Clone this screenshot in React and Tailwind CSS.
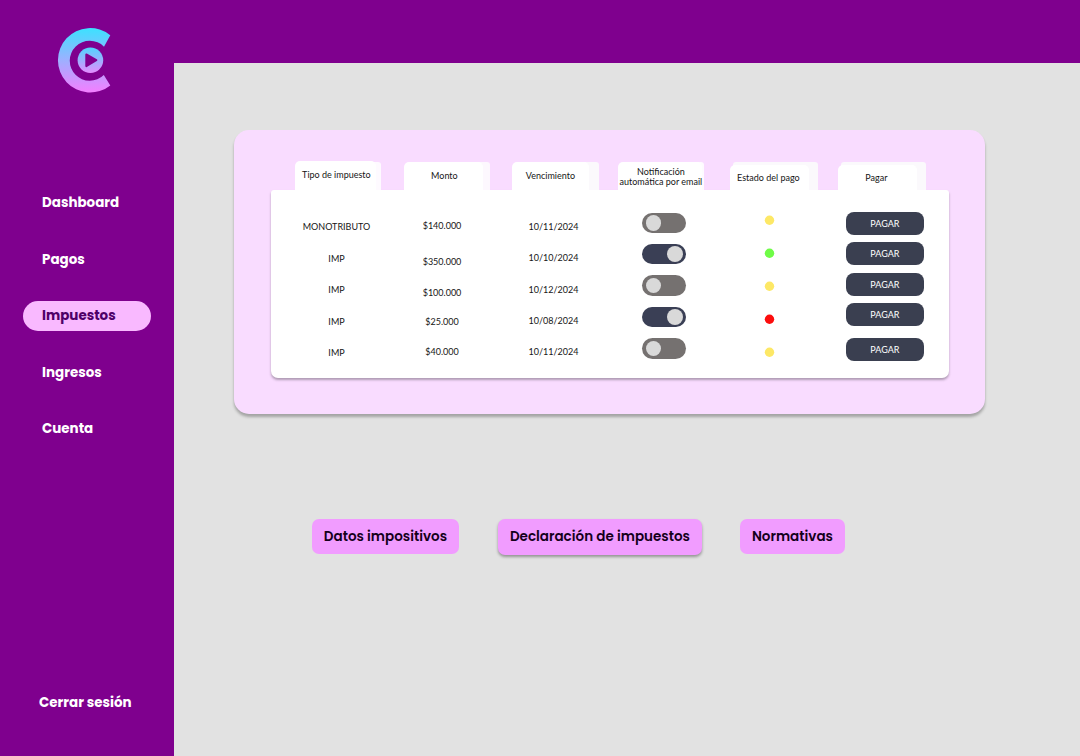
const NAV = [
  { label: 'Dashboard' },
  { label: 'Pagos' },
  { label: 'Impuestos', active: true },
  { label: 'Ingresos' },
  { label: 'Cuenta' },
];

const TYPES = ['MONOTRIBUTO', 'IMP', 'IMP', 'IMP', 'IMP'];
const AMOUNTS = [
  ['$140.000', 'mt-0'],
  ['$350.000', 'mt-[24px]'],
  ['$100.000', 'mt-[19px]'],
  ['$25.000', 'mt-[17px]'],
  ['$40.000', 'mt-[18px]'],
];
const DATES = ['10/11/2024', '10/10/2024', '10/12/2024', '10/08/2024', '10/11/2024'];
const SWITCHES = [false, true, false, true, false];
const STATES = ['fill-[#fde866]', 'fill-[#6ffc47]', 'fill-[#fde866]', 'fill-[#fc0d0d]', 'fill-[#fde866]'];
const PAY_GAPS = ['mt-0', 'mt-[7px]', 'mt-[8px]', 'mt-[7px]', 'mt-[11.5px]'];

function Logo() {
  return (
    <svg width="56" height="68" viewBox="56 26 56 68" aria-hidden="true">
      <defs>
        <linearGradient id="ring" gradientUnits="userSpaceOnUse" x1="90" y1="28" x2="90" y2="92">
          <stop offset="0" stopColor="#3be2ff" />
          <stop offset="0.5" stopColor="#9db0ff" />
          <stop offset="1" stopColor="#f27fff" />
        </linearGradient>
        <linearGradient id="disc" gradientUnits="userSpaceOnUse" x1="90" y1="47" x2="90" y2="73">
          <stop offset="0" stopColor="#4dd6ff" />
          <stop offset="1" stopColor="#e58cff" />
        </linearGradient>
      </defs>
      <path d="M110.3 35.2A32.2 32.2 0 1 0 110.3 85.4L103.8 75A20 20 0 1 1 104 46.7Z" fill="url(#ring)" />
      <circle cx="90.4" cy="60.2" r="12.8" fill="url(#disc)" />
      <path d="M86.3 54.4L96.3 60.2L86.3 66.1Z" fill="#80008f" stroke="#80008f" strokeWidth="2" strokeLinejoin="round" />
    </svg>
  );
}

function Tab({ box, back, front, text, children }) {
  return (
    <div className={`relative shrink-0 ${box}`}>
      <div className={`absolute bottom-0 rounded-t-[3px] ${back}`} />
      <div className={`absolute bottom-0 left-0 bg-white rounded-t-[5px] ${front}`} />
      <div className={`relative whitespace-nowrap text-center text-[9px] leading-[10px] text-[#161616] ${text}`}>{children}</div>
    </div>
  );
}

function Toggle({ on }) {
  return (
    <div className={`flex h-[20.4px] w-[44px] items-center rounded-full px-[3.5px] ${on ? 'justify-end bg-[#3a3f55]' : 'bg-[#757170]'}`}>
      <div className="size-[15.6px] rounded-full bg-[#d9d9d9]" />
    </div>
  );
}

function TaxTable() {
  return (
    <section className="ml-[60px] mt-[67.4px] h-[283.6px] w-[751px] rounded-[15px] bg-[#f9dcff] pl-[37px] shadow-[0_3px_3px_rgba(0,0,0,0.28)]">
      <div className="flex h-[59.5px] items-end pl-[24.4px]">
        <Tab box="h-[29.2px] w-[86px]" back="right-0 h-[28px] w-[20px] bg-[#fefaff]" front="h-[29.2px] w-[81px]" text="w-[82px] pt-[9.4px]">Tipo de impuesto</Tab>
        <Tab box="ml-[23px] h-[28px] w-[86px]" back="right-0 h-[28px] w-[20px] bg-[#fdf8fe]" front="h-[28px] w-[79px]" text="w-[80px] pt-[9px]">Monto</Tab>
        <Tab box="ml-[21.5px] h-[28px] w-[87px]" back="right-0 h-[28px] w-[30px] bg-[#fbf9fc]" front="h-[28px] w-[77px]" text="w-[77px] pt-[9px]">Vencimiento</Tab>
        <Tab box="ml-[19px] h-[28px] w-[86px]" back="right-0 h-[28px] w-[20px] bg-[#fefbff]" front="h-[28px] w-[84px]" text="flex w-[86px] flex-col items-center pt-[5px]">
          <span>Notificación</span>
          <span>automática por email</span>
        </Tab>
        <Tab box="ml-[26px] h-[28px] w-[88px]" back="right-0 h-[28px] w-[85px] bg-[#fbf9fc]" front="h-[24.5px] w-[79px]" text="w-[77px] pt-[11px]">Estado del pago</Tab>
        <Tab box="ml-[20px] h-[28px] w-[88.5px]" back="right-0 h-[28px] w-[85.5px] bg-[#fbf9fc]" front="h-[24.5px] w-[79px]" text="w-[77px] pt-[11px]">Pagar</Tab>
      </div>
      <div className="flex h-[188px] w-[677.5px] rounded-b-[7px] rounded-t-[3px] bg-white text-center text-[9px] leading-[12px] text-[#161616] shadow-[0_2px_2.5px_rgba(0,0,0,0.3)]">
        <div className="flex w-[131px] flex-col gap-[19.6px] pt-[31.2px]">
          {TYPES.map((t, i) => <div key={i}>{t}</div>)}
        </div>
        <div className="flex w-[80px] flex-col pt-[30px]">
          {AMOUNTS.map(([a, gap], i) => <div key={i} className={gap}>{a}</div>)}
        </div>
        <div className="flex w-[143px] flex-col gap-[19.4px] pt-[31px]">
          {DATES.map((d, i) => <div key={i}>{d}</div>)}
        </div>
        <div className="ml-[17px] flex w-[44px] flex-col gap-[11px] pt-[22.8px]">
          {SWITCHES.map((on, i) => <Toggle key={i} on={on} />)}
        </div>
        <div className="ml-[78px] flex w-[11px] shrink-0 flex-col gap-[22px] pt-[25px]">
          {STATES.map((c, i) => (
            <svg key={i} width="11" height="11" viewBox="0 0 11 11" className={c}><circle cx="5.5" cy="5.2" r="4.7" /></svg>
          ))}
        </div>
        <div className="ml-[71px] flex w-[77.7px] flex-col pt-[21.8px]">
          {PAY_GAPS.map((gap, i) => (
            <button key={i} className={`h-[23.2px] shrink-0 rounded-[8px] bg-[#3a3f50] text-[9px] leading-[23px] text-white ${gap}`}>PAGAR</button>
          ))}
        </div>
      </div>
    </section>
  );
}

export default function App() {
  return (
    <div className="flex h-[756px] w-[1080px] overflow-hidden bg-[#7f008e] font-['Lato',sans-serif]">
      <aside className="flex w-[174px] shrink-0 flex-col font-['Poppins','Inter',sans-serif] text-[13.45px] font-bold text-white">
        <div className="pl-[56px] pt-[26px]">
          <Logo />
        </div>
        <nav className="mt-[94px] flex flex-col gap-[26.4px] pl-[23px]">
          {NAV.map((n) => (
            <a key={n.label} className={`flex h-[30px] w-[128px] items-center rounded-full pl-[19px] pt-[1px] ${n.active ? 'bg-[#f9b9ff] text-[#4f0068]' : ''}`}>{n.label}</a>
          ))}
        </nav>
        <a className="mb-[43.5px] mt-auto pl-[39px] leading-[20px]">Cerrar sesión</a>
      </aside>
      <main className="mt-[63px] flex-1 bg-[#e2e2e2]">
        <TaxTable />
        <div className="ml-[137.7px] mt-[105.5px] flex font-['Poppins','Inter',sans-serif] text-[13.52px] font-semibold text-[#14001a]">
          <button className="h-[34.5px] w-[147.5px] rounded-[7px] bg-[#f19cff]">Datos impositivos</button>
          <button className="ml-[38.5px] h-[35.5px] w-[204.5px] rounded-[7px] bg-[#f19cff] shadow-[0_2px_3px_rgba(0,0,0,0.35)]">Declaración de impuestos</button>
          <button className="ml-[37.5px] h-[34.5px] w-[105.5px] rounded-[7px] bg-[#f19cff]">Normativas</button>
        </div>
      </main>
    </div>
  );
}
